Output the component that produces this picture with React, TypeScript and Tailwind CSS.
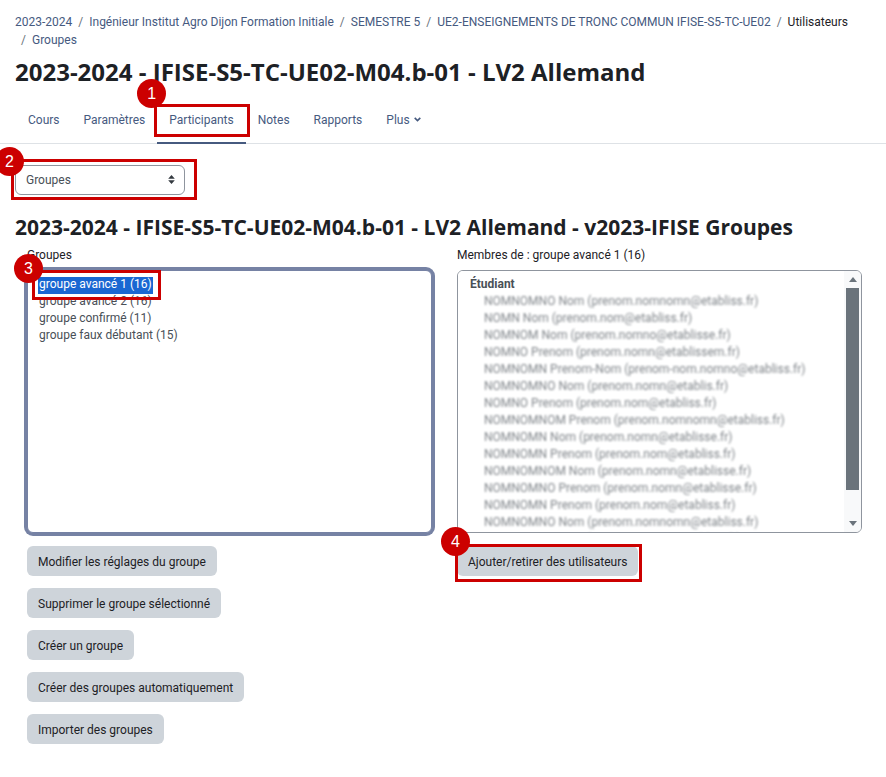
import React from 'react';
import { clsx } from 'clsx';

interface CalloutProps {
  step: number;
  className: string;
  badgeClass: string;
}

// Red frame with its numbered badge, laid over the control it points at
const Callout: React.FC<CalloutProps> = ({ step, className, badgeClass }) => (
  <span className={clsx('absolute z-10 border-3 border-[#cc0000] pointer-events-none', className)}>
    <span
      className={clsx(
        "absolute flex size-[29px] items-center justify-center rounded-full bg-[#cc0000] text-base leading-none text-white font-['Liberation_Sans',sans-serif]",
        badgeClass
      )}
    >
      {step}
    </span>
  </span>
);

const breadcrumbs = [
  { label: '2023-2024', link: true },
  { label: 'Ingénieur Institut Agro Dijon Formation Initiale', link: true },
  { label: 'SEMESTRE 5', link: true },
  { label: 'UE2-ENSEIGNEMENTS DE TRONC COMMUN IFISE-S5-TC-UE02', link: true },
  { label: 'Utilisateurs', link: false },
  { label: 'Groupes', link: true },
];

const tabs = ['Cours', 'Paramètres', 'Participants', 'Notes', 'Rapports'];

const groups = [
  'groupe avancé 1 (16)',
  'groupe avancé 2 (16)',
  'groupe confirmé (11)',
  'groupe faux débutant (15)',
];

// Personal data stays hidden: placeholder entries, blurred in the list
const members = [
  'NOMNOMNO Nom (prenom.nomnomn@etabliss.fr)',
  'NOMN Nom (prenom.nom@etabliss.fr)',
  'NOMNOM Nom (prenom.nomno@etablisse.fr)',
  'NOMNO Prenom (prenom.nomn@etablissem.fr)',
  'NOMNOMN Prenom-Nom (prenom-nom.nomno@etabliss.fr)',
  'NOMNOMNO Nom (prenom.nomn@etablis.fr)',
  'NOMNO Prenom (prenom.nom@etabliss.fr)',
  'NOMNOMNOM Prenom (prenom.nomnomn@etabliss.fr)',
  'NOMNOMN Nom (prenom.nomn@etablisse.fr)',
  'NOMNOMN Prenom (prenom.nom@etabliss.fr)',
  'NOMNOMNOM Nom (prenom.nomn@etablisse.fr)',
  'NOMNOMNO Prenom (prenom.nomn@etablisse.fr)',
  'NOMNOMN Prenom (prenom.nom@etabliss.fr)',
  'NOMNOMNO Nom (prenom.nomnomn@etabliss.fr)',
  'NOMNOM Prenom (prenom.nomno@etabliss.fr)',
];

const actions = [
  'Modifier les réglages du groupe',
  'Supprimer le groupe sélectionné',
  'Créer un groupe',
  'Créer des groupes automatiquement',
  'Importer des groupes',
];

const buttonClass = 'h-[30px] rounded-md bg-[#ced4da] px-[11px] pt-0.5 text-[#1d2125] cursor-pointer';
const headingFont = "font-bold font-['Open_Sans','Noto_Sans',sans-serif]";

const App: React.FC = () => {
  return (
    <div className="bg-white pt-[13px] pb-8 text-xs leading-[18px] text-[#1d2125] font-['Roboto','Open_Sans',sans-serif]">
      <header className="px-[15px]">
        <nav aria-label="Fil d'Ariane">
          <ol className="flex flex-wrap">
            {breadcrumbs.map((item, i) => (
              <li key={item.label} className={clsx('flex', i > 0 && 'pl-1.5')}>
                {i > 0 && <span className="pr-1.5 text-[#6a737b]">/</span>}
                {item.link ? <a href="#" className="text-[#465a7f]">{item.label}</a> : <span>{item.label}</span>}
              </li>
            ))}
          </ol>
        </nav>
        <h1 className={clsx('mt-2 text-2xl leading-[30px]', headingFont)}>2023-2024 - IFISE-S5-TC-UE02-M04.b-01 - LV2 Allemand</h1>
      </header>

      <nav className="mt-2 flex h-[49px] border-b border-[#dee2e6] px-4">
        {tabs.map((tab) => (
          <a
            key={tab}
            href="#"
            className={clsx(
              'relative flex h-[49px] items-center border-b-2 px-3 pt-0.5 text-[#465a7f]',
              tab === 'Participants' ? 'border-[#465a7f]' : 'border-transparent'
            )}
          >
            {tab}
            {tab === 'Participants' && (
              <Callout step={1} className="-left-[3px] -right-1 top-[9px] h-[33px]" badgeClass="-left-5 -top-7" />
            )}
          </a>
        ))}
        <button type="button" className="flex h-[47px] items-center gap-1 px-3 pt-0.5 text-[#465a7f]">
          Plus
          <svg width="7" height="5" viewBox="0 0 7 5" fill="none" stroke="currentColor" strokeWidth="1.6" aria-hidden="true">
            <path d="M0.7 0.9 3.5 3.6 6.3 0.9" />
          </svg>
        </button>
      </nav>

      <main className="pl-[15px] pr-3 pt-[21px]">
        <div className="relative w-[170px]">
          <select
            aria-label="Navigation des participants"
            className="block h-[30px] w-full appearance-none rounded-md border border-[#8f959e] bg-white px-2.5 text-[#495057]"
          >
            <option>Groupes</option>
          </select>
          <svg className="absolute right-2.5 top-2.5 pointer-events-none" width="7" height="9" viewBox="0 0 7 9" fill="#343a40" aria-hidden="true">
            <path d="M3.5 0 6.8 3.8H0.2zM3.5 9 0.2 5.2H6.8z" />
          </svg>
          <Callout step={2} className="-left-1 -right-3 -top-1.5 h-[41px]" badgeClass="-left-[19px] -top-[15px]" />
        </div>

        <h2 className={clsx('mt-[17px] text-[21px] leading-[30px]', headingFont)}>
          2023-2024 - IFISE-S5-TC-UE02-M04.b-01 - LV2 Allemand - v2023-IFISE Groupes
        </h2>

        <div className="grid grid-cols-2 gap-[25px] px-3">
          <section>
            <label htmlFor="groups" className="mt-1 block">Groupes</label>
            <div className="relative mt-1.5">
              <select
                id="groups"
                multiple
                defaultValue={[groups[0]]}
                className="block h-[263px] w-full overflow-hidden rounded-md border border-[#7682a4] bg-white px-2.5 py-1.5 text-[#495057] ring-3 ring-[#7682a4]"
              >
                {groups.map((group) => (
                  <option
                    key={group}
                    className="w-fit min-h-[17px] h-[17px] px-px py-0 leading-[17px] checked:bg-linear-to-r checked:from-[#1967d2] checked:to-[#1967d2] checked:text-white!"
                  >
                    {group}
                  </option>
                ))}
              </select>
              <Callout step={3} className="left-[5px] top-0 h-[30px] w-[129px]" badgeClass="-left-[21px] -top-[19px]" />
            </div>
            <div className="mt-[13px] flex flex-col items-start gap-3">
              {actions.map((action) => (
                <button key={action} type="button" className={buttonClass}>{action}</button>
              ))}
            </div>
          </section>

          <section>
            <label htmlFor="members" className="mt-1 block">Membres de : groupe avancé 1 (16)</label>
            <div className="mt-1.5 flex h-[263px] overflow-hidden rounded-md border border-[#8f959e] bg-white">
              <select id="members" multiple className="min-w-0 grow overflow-hidden bg-white px-2.5 py-1.5 text-[#495057]">
                <optgroup label="Étudiant" className="leading-[17px] font-bold">
                  {members.map((member, i) => (
                    <option key={i} className="h-[17px] min-h-[17px] py-0 pl-4 leading-[17px] font-normal opacity-70 blur-[1px] first-of-type:mt-0.5">
                      {member}
                    </option>
                  ))}
                </optgroup>
              </select>
              <div className="flex w-[17px] flex-col items-center justify-between bg-[#f8f9fa] py-1.5" aria-hidden="true">
                <svg width="8" height="5" viewBox="0 0 8 5" fill="#6a737b"><path d="M0 5 4 0l4 5z" /></svg>
                <div className="mt-1.5 mb-[31px] w-[13px] grow bg-[#6a737b]" />
                <svg width="8" height="5" viewBox="0 0 8 5" fill="#6a737b"><path d="M0 0h8L4 5z" /></svg>
              </div>
            </div>
            <div className="relative mt-[13px] inline-block">
              <button type="button" className={buttonClass}>Ajouter/retirer des utilisateurs</button>
              <Callout step={4} className="-left-0.5 -right-1 -top-0.5 h-[38px]" badgeClass="-left-[17px] -top-5" />
            </div>
          </section>
        </div>
      </main>
    </div>
  );
};

export default App;
